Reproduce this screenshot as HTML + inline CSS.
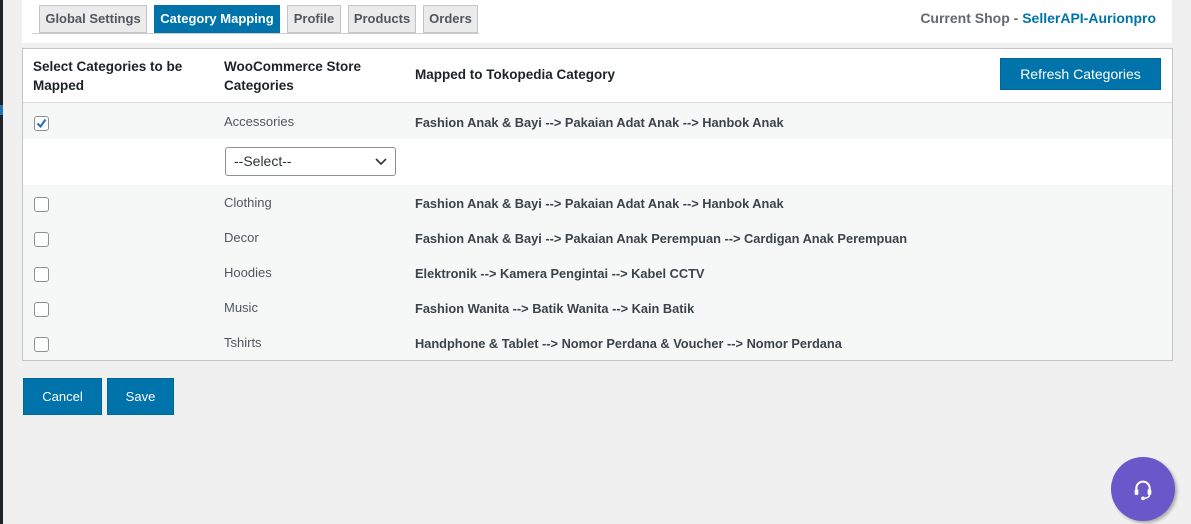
<!DOCTYPE html><html><head><style>
*{box-sizing:border-box}body{margin:0;width:1191px;height:524px;background:#f0f0f1;font-family:"Liberation Sans","DejaVu Sans",sans-serif;position:relative;overflow:hidden;color:#3c434a}
.a{position:absolute}
.tab{position:absolute;top:5px;height:28px;border:1px solid #c3c4c7;background:#ebebeb;font-size:13px;font-weight:bold;color:#50575e;line-height:26px;text-align:center}
.th{font-size:13.5px;font-weight:bold;color:#1d2327;line-height:19px}
.cell{font-size:13px;color:#50575e}
.map{font-size:12.8px;font-weight:bold;color:#3c434a}
.cb{position:absolute;left:34px;width:15px;height:15px;border:1px solid #8c8f94;border-radius:3px;background:#fff}
.btn{position:absolute;background:#0073aa;color:#fff;font-size:13px;text-align:center;border:1px solid #006799}
</style></head><body>
<div class="a" style="left:0;top:0;width:3px;height:524px;background:#1d2327"></div>
<div class="a" style="left:0;top:105px;width:3px;height:10px;background:#2271b1"></div>
<div class="a" style="left:22px;top:0;width:1150px;height:43px;background:#fff"></div>
<div class="a" style="left:32px;top:33px;width:447px;height:1px;background:#ccc"></div>
<div class="tab" style="left:39px;width:108px">Global Settings</div>
<div class="tab" style="left:154px;width:126px;background:#0073aa;color:#fff;border-color:#0073aa">Category Mapping</div>
<div class="tab" style="left:287px;width:54px">Profile</div>
<div class="tab" style="left:348px;width:68px">Products</div>
<div class="tab" style="left:423px;width:55px">Orders</div>
<div class="a" style="right:35px;top:10px;font-size:14px;font-weight:bold;color:#646970">Current Shop - <span style="color:#0073aa">SellerAPI-Aurionpro</span></div>
<div class="a" style="left:22px;top:48px;width:1151px;height:313px;border:1px solid #c3c4c7;background:#f6f7f7"></div>
<div class="a" style="left:23px;top:49px;width:1149px;height:54px;background:#fff;border-bottom:1px solid #dcdcde"></div>
<div class="a th" style="left:33px;top:57px;width:180px">Select Categories to be Mapped</div>
<div class="a th" style="left:224px;top:57px;width:180px">WooCommerce Store Categories</div>
<div class="a th" style="left:415px;top:65px">Mapped to Tokopedia Category</div>
<div class="btn" style="left:1000px;top:58px;width:161px;height:32px;line-height:30px;font-size:14px">Refresh Categories</div>
<div class="a" style="left:23px;top:139px;width:1149px;height:46px;background:#fff"></div>
<div class="a" style="left:225px;top:147px;width:171px;height:29px;border:1px solid #8c8f94;border-radius:3px;background:#fff;font-size:14px;line-height:27px;padding-left:8px;color:#2c3338">--Select--<svg class="a" style="right:8px;top:10px" width="12" height="8" viewBox="0 0 12 8"><path d="M1 1l5 5 5-5" stroke="#2c3338" stroke-width="1.6" fill="none"/></svg></div>
<div class="cb" style="top:116px"><svg width="13" height="13" viewBox="0 0 13 13"><path d="M2.5 6.5l3 3 5-7" stroke="#2271b1" stroke-width="2" fill="none"/></svg></div>
<div class="a cell" style="left:224px;top:114px">Accessories</div>
<div class="a map" style="left:415px;top:115px">Fashion Anak &amp; Bayi --&gt; Pakaian Adat Anak --&gt; Hanbok Anak</div>
<div class="cb" style="top:197px"></div><div class="a cell" style="left:224px;top:195px">Clothing</div><div class="a map" style="left:415px;top:196px">Fashion Anak &amp; Bayi --&gt; Pakaian Adat Anak --&gt; Hanbok Anak</div>
<div class="cb" style="top:232px"></div><div class="a cell" style="left:224px;top:230px">Decor</div><div class="a map" style="left:415px;top:231px">Fashion Anak &amp; Bayi --&gt; Pakaian Anak Perempuan --&gt; Cardigan Anak Perempuan</div>
<div class="cb" style="top:267px"></div><div class="a cell" style="left:224px;top:265px">Hoodies</div><div class="a map" style="left:415px;top:266px">Elektronik --&gt; Kamera Pengintai --&gt; Kabel CCTV</div>
<div class="cb" style="top:302px"></div><div class="a cell" style="left:224px;top:300px">Music</div><div class="a map" style="left:415px;top:301px">Fashion Wanita --&gt; Batik Wanita --&gt; Kain Batik</div>
<div class="cb" style="top:337px"></div><div class="a cell" style="left:224px;top:335px">Tshirts</div><div class="a map" style="left:415px;top:336px">Handphone &amp; Tablet --&gt; Nomor Perdana &amp; Voucher --&gt; Nomor Perdana</div>
<div class="btn" style="left:23px;top:378px;width:79px;height:37px;line-height:35px">Cancel</div>
<div class="btn" style="left:107px;top:378px;width:67px;height:37px;line-height:35px">Save</div>
<div class="a" style="left:1111px;top:457px;width:64px;height:64px;border-radius:50%;background:#6a57c9;box-shadow:2px 2px 3px rgba(0,0,0,.3)"><svg style="position:absolute;left:22px;top:22px" width="20" height="22" viewBox="0 0 24 26"><path d="M4 13v-2a8 8 0 0 1 16 0v2" stroke="#fff" stroke-width="2.4" fill="none"/><rect x="2" y="12" width="4.5" height="7" rx="2" fill="#fff"/><rect x="17.5" y="12" width="4.5" height="7" rx="2" fill="#fff"/><path d="M20 18q0 4-6 5" stroke="#fff" stroke-width="1.8" fill="none"/><circle cx="12" cy="23" r="2.2" fill="#fff"/></svg></div>
</body></html>
